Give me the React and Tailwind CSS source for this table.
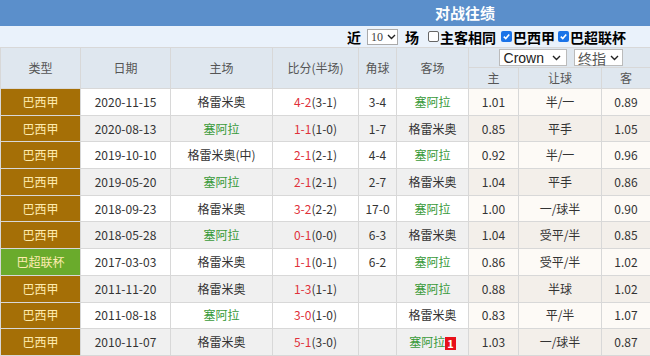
import React from "react";

// head-to-head records (对战往绩)
const ROWS = [
  { type: "巴西甲", date: "2020-11-15", home: "格雷米奥", score: "4-2", half: "(3-1)", corner: "3-4", away: "塞阿拉", h: "1.01", hc: "半/一", a: "0.89" },
  { type: "巴西甲", date: "2020-08-13", home: "塞阿拉", score: "1-1", half: "(1-0)", corner: "1-7", away: "格雷米奥", h: "0.85", hc: "平手", a: "1.05" },
  { type: "巴西甲", date: "2019-10-10", home: "格雷米奥(中)", score: "2-1", half: "(2-1)", corner: "4-4", away: "塞阿拉", h: "0.92", hc: "半/一", a: "0.96" },
  { type: "巴西甲", date: "2019-05-20", home: "塞阿拉", score: "2-1", half: "(2-1)", corner: "2-7", away: "格雷米奥", h: "1.04", hc: "平手", a: "0.86" },
  { type: "巴西甲", date: "2018-09-23", home: "格雷米奥", score: "3-2", half: "(2-2)", corner: "17-0", away: "塞阿拉", h: "1.00", hc: "一/球半", a: "0.90" },
  { type: "巴西甲", date: "2018-05-28", home: "塞阿拉", score: "0-1", half: "(0-0)", corner: "6-3", away: "格雷米奥", h: "1.04", hc: "受平/半", a: "0.85" },
  { type: "巴超联杯", date: "2017-03-03", home: "格雷米奥", score: "1-1", half: "(0-1)", corner: "6-2", away: "塞阿拉", h: "0.86", hc: "受平/半", a: "1.02" },
  { type: "巴西甲", date: "2011-11-20", home: "格雷米奥", score: "1-3", half: "(1-1)", corner: "", away: "塞阿拉", h: "0.88", hc: "半球", a: "1.02" },
  { type: "巴西甲", date: "2011-08-18", home: "塞阿拉", score: "3-0", half: "(1-0)", corner: "", away: "格雷米奥", h: "0.83", hc: "平/半", a: "1.07" },
  { type: "巴西甲", date: "2010-11-07", home: "格雷米奥", score: "5-1", half: "(3-0)", corner: "", away: "塞阿拉", h: "1.03", hc: "一/球半", a: "0.87", card: "1" },
];

const Team = ({ name }) => (
  <span className={name.startsWith("塞阿拉") ? "text-[#3a9a3a]" : "text-[#333]"}>{name}</span>
);

const Check = ({ on }) =>
  on ? (
    <span className="inline-flex w-[11px] h-[11px] rounded-[2px] bg-[#1a73e8] items-center justify-center mx-[1px]">
      <svg width="9" height="9" viewBox="0 0 10 10">
        <path d="M2 5.2 L4.2 7.3 L8 2.8" fill="none" stroke="#fff" strokeWidth="1.8" />
      </svg>
    </span>
  ) : (
    <span className="inline-block w-[11px] h-[11px] rounded-[2px] border border-[#666] bg-white mx-[1px]" />
  );

const Chevron = () => (
  <svg width="9" height="6" viewBox="0 0 9 6" className="ml-[4px]">
    <path d="M1 1 L4.5 4.5 L8 1" fill="none" stroke="#222" strokeWidth="1.4" />
  </svg>
);

export default function App() {
  const td = "border border-[#d8d8d8] text-center p-0";
  return (
    <div className="w-[650px] h-[356px] overflow-hidden bg-white text-[12px] text-[#333] font-['Noto_Sans_CJK_SC','Microsoft_YaHei',sans-serif]">
      {/* title */}
      <div className="h-[26px] bg-[#5b8fcb] flex items-center justify-center pl-[280px] text-white font-bold text-[15px]">
        对战往绩
      </div>

      {/* filters */}
      <div className="h-[21px] bg-[#eaf2fb] flex items-center pl-[347px] text-[14px] font-bold text-black leading-none">
        <span>近</span>
        <span className="ml-[6px] mr-[7px] inline-flex items-center h-[16px] w-[31px] border border-[#aaa] bg-white pl-[3px] text-[12px] font-normal font-['Liberation_Serif',serif] text-[#444]">
          10<Chevron />
        </span>
        <span className="mr-[8px]">场</span>
        <Check />
        <span className="mr-[4px]">主客相同</span>
        <Check on />
        <span className="mr-[2px]">巴西甲</span>
        <Check on />
        <span>巴超联杯</span>
      </div>

      <table className="table-fixed border-collapse w-[650px]">
        <colgroup>
          <col className="w-[80px]" />
          <col className="w-[90px]" />
          <col className="w-[102px]" />
          <col className="w-[86px]" />
          <col className="w-[38px]" />
          <col className="w-[72px]" />
          <col className="w-[50px]" />
          <col className="w-[83px]" />
          <col className="w-[49px]" />
        </colgroup>
        <thead className="bg-[#dfe7ef] text-[#555]">
          <tr className="h-[20px]">
            <th rowSpan={2} className={`${td} font-normal`}>类型</th>
            <th rowSpan={2} className={`${td} font-normal`}>日期</th>
            <th rowSpan={2} className={`${td} font-normal`}>主场</th>
            <th rowSpan={2} className={`${td} font-normal`}>比分(半场)</th>
            <th rowSpan={2} className={`${td} font-normal`}>角球</th>
            <th rowSpan={2} className={`${td} font-normal`}>客场</th>
            <th colSpan={3} className="p-0 font-normal border-t border-[#d8d8d8]">
              <div className="flex justify-center gap-[7px] pl-[2px] text-[14px] text-[#222]">
                <span className="inline-flex items-center h-[17px] bg-white border border-[#bbb] pl-[4px] pr-[5px] font-['Liberation_Sans',sans-serif] leading-none">
                  Crown<span className="w-[4px]" /><Chevron />
                </span>
                <span className="inline-flex items-center h-[17px] bg-white border border-[#bbb] pl-[3px] pr-[3px] leading-none text-[#555]">
                  终指<Chevron />
                </span>
              </div>
            </th>
          </tr>
          <tr className="h-[21px]">
            <th className={`${td} font-normal`}>主</th>
            <th className={`${td} font-normal`}>让球</th>
            <th className={`${td} font-normal`}>客</th>
          </tr>
        </thead>
        <tbody>
          {ROWS.map((r, i) => {
            const alt = i % 2 === 1;
            const bg = alt ? "bg-[#f0f0f0]" : "bg-white";
            const odds = alt ? "bg-[#f3efea]" : "bg-[#fdfaf6]";
            return (
              <tr key={i} className="h-[26.7px]">
                <td
                  className={`${td} text-[#ffecb0] ${
                    r.type === "巴超联杯" ? "bg-[#6aab2c]" : "bg-[#a56f06]"
                  }`}
                >
                  {r.type}
                </td>
                <td className={`${td} ${bg}`}>{r.date}</td>
                <td className={`${td} ${bg}`}>
                  <Team name={r.home} />
                </td>
                <td className={`${td} ${bg}`}>
                  <span className="text-[#e0303a]">{r.score}</span>
                  {r.half}
                </td>
                <td className={`${td} ${bg}`}>{r.corner}</td>
                <td className={`${td} ${bg}`}>
                  <Team name={r.away} />
                  {r.card && (
                    <span className="inline-block bg-[#e8101a] text-white font-bold text-[11px] leading-[13px] px-[2px] align-middle">
                      {r.card}
                    </span>
                  )}
                </td>
                <td className={`${td} ${odds}`}>{r.h}</td>
                <td className={`${td} ${odds}`}>{r.hc}</td>
                <td className={`${td} ${odds}`}>{r.a}</td>
              </tr>
            );
          })}
        </tbody>
      </table>
    </div>
  );
}
